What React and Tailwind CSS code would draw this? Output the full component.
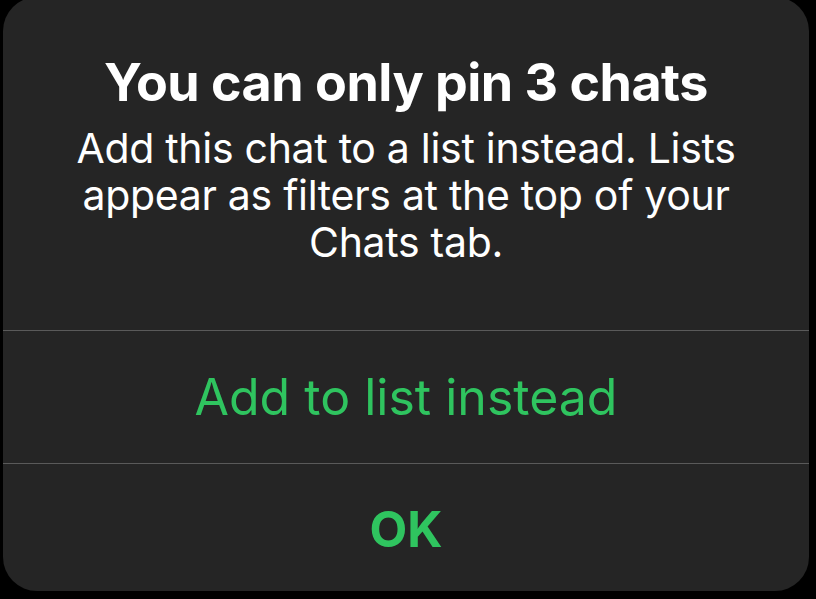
export default function App() {
  const font = { fontFamily: 'Inter, "Noto Sans", sans-serif' };
  return (
    <div className="w-[816px] h-[599px] bg-black overflow-hidden" style={font}>
      <div className="ml-[3px] mt-[-3px] w-[806px] h-[594px] bg-[#252525] rounded-[34px] flex flex-col text-white">
        <div className="h-[333px] flex flex-col items-center pt-[56px]">
          <div className="text-[52px] font-bold leading-[60px] tracking-[-0.5px]">You can only pin 3 chats</div>
          <div className="mt-[12px] text-[41px] leading-[47px] text-center tracking-[-0.3px]">
            Add this chat to a list instead. Lists
            <br />
            appear as filters at the top of your
            <br />
            Chats tab.
          </div>
        </div>
        <div className="h-px bg-[#5a5a5a]" />
        <div className="h-[132px] flex items-center justify-center text-[50px] text-[#2fc45f]">
          Add to list instead
        </div>
        <div className="h-px bg-[#5a5a5a]" />
        <div className="flex-1 flex items-center justify-center pt-[4px] text-[49px] font-bold text-[#2fc45f]">
          OK
        </div>
      </div>
    </div>
  );
}
